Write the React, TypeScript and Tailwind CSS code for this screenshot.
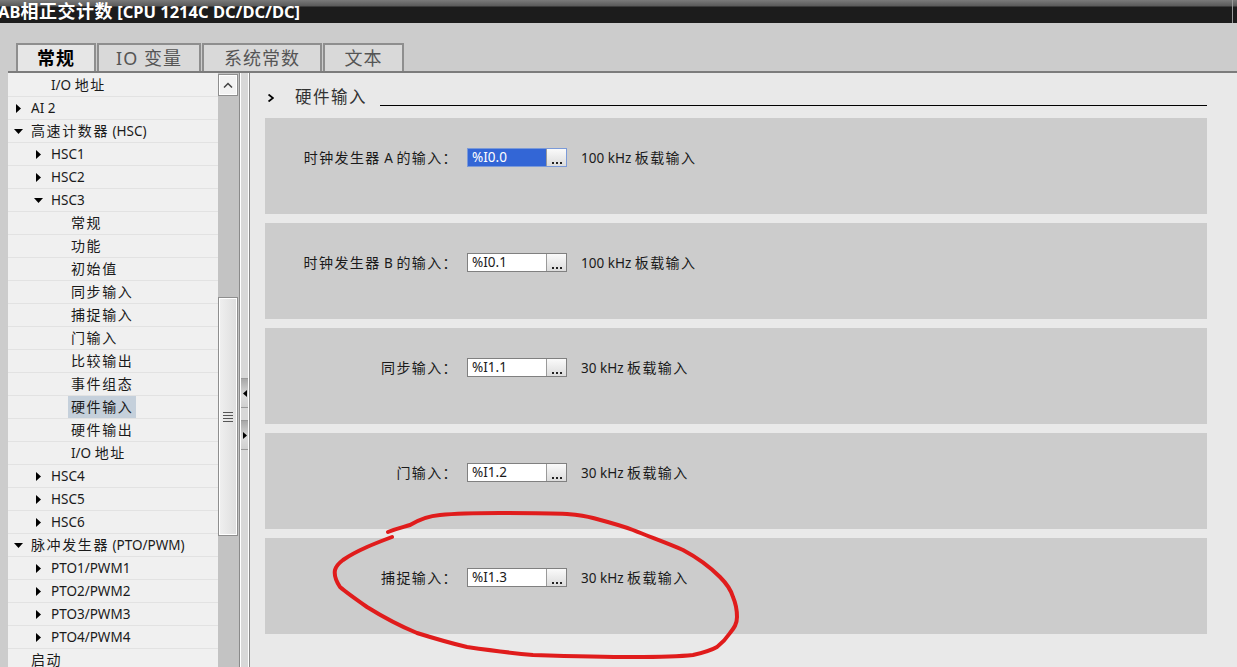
import React from 'react';

type Node = { label: string; level: 0 | 1 | 2; arrow?: 'right' | 'down'; selected?: boolean };

const tree: Node[] = [
    { label: 'I/O 地址', level: 1 },
    { label: 'AI 2', level: 0, arrow: 'right' },
    { label: '高速计数器 (HSC)', level: 0, arrow: 'down' },
    { label: 'HSC1', level: 1, arrow: 'right' },
    { label: 'HSC2', level: 1, arrow: 'right' },
    { label: 'HSC3', level: 1, arrow: 'down' },
    { label: '常规', level: 2 },
    { label: '功能', level: 2 },
    { label: '初始值', level: 2 },
    { label: '同步输入', level: 2 },
    { label: '捕捉输入', level: 2 },
    { label: '门输入', level: 2 },
    { label: '比较输出', level: 2 },
    { label: '事件组态', level: 2 },
    { label: '硬件输入', level: 2, selected: true },
    { label: '硬件输出', level: 2 },
    { label: 'I/O 地址', level: 2 },
    { label: 'HSC4', level: 1, arrow: 'right' },
    { label: 'HSC5', level: 1, arrow: 'right' },
    { label: 'HSC6', level: 1, arrow: 'right' },
    { label: '脉冲发生器 (PTO/PWM)', level: 0, arrow: 'down' },
    { label: 'PTO1/PWM1', level: 1, arrow: 'right' },
    { label: 'PTO2/PWM2', level: 1, arrow: 'right' },
    { label: 'PTO3/PWM3', level: 1, arrow: 'right' },
    { label: 'PTO4/PWM4', level: 1, arrow: 'right' },
    { label: '启动', level: 0 },
];

const indent = ['pl-[3px]', 'pl-[23px]', 'pl-[43px]'];

const rows = [
    { label: '时钟发生器 A 的输入：', value: '%I0.0', info: '100 kHz 板载输入', active: true },
    { label: '时钟发生器 B 的输入：', value: '%I0.1', info: '100 kHz 板载输入' },
    { label: '同步输入：', value: '%I1.1', info: '30 kHz 板载输入' },
    { label: '门输入：', value: '%I1.2', info: '30 kHz 板载输入' },
    { label: '捕捉输入：', value: '%I1.3', info: '30 kHz 板载输入' },
];

// CJK glyphs in the original are set wider than the latin ones, so split the runs
const Mixed = ({ text, cjk }: { text: string; cjk: string }) => (
    <span className="whitespace-pre">
        {text.split(/([\u4e00-\u9fff\uff1a]+)/).filter(Boolean).map((part, i) =>
            /[\u4e00-\u9fff\uff1a]/.test(part) ? <span key={i} className={cjk}>{part}</span> : <React.Fragment key={i}>{part}</React.Fragment>
        )}
    </span>
);

const Arrow = ({ dir }: { dir?: 'right' | 'down' }) => (
    <span className="w-[14px] h-full flex items-center justify-center shrink-0">
        {dir === 'right' && (
            <svg width="5" height="9" viewBox="0 0 5 9"><path d="M0 0 L5 4.5 L0 9 Z" fill="#000" /></svg>
        )}
        {dir === 'down' && (
            <svg width="9" height="5" viewBox="0 0 9 5"><path d="M0 0 L9 0 L4.5 5 Z" fill="#000" /></svg>
        )}
    </span>
);

const Tab = ({ children, active, w }: { children: React.ReactNode; active?: boolean; w: string }) => (
    <div
        className={`${w} h-[28px] flex items-center justify-center border-2 border-b-0 border-[#8e8e8e] text-[18px] leading-none tracking-[1px] ${active ? 'bg-[#e6e6e6] text-black font-bold' : 'bg-[#d9d9d9] text-[#555555]'}`}
    >
        {children}
    </div>
);

export default function App() {
    return (
        <div className="relative w-[1237px] h-[667px] overflow-hidden bg-[#cccccc] flex flex-col font-['Noto_Sans','Noto_Sans_CJK_SC',sans-serif] text-[#1a1a1a]">
            {/* title */}
            <div className="h-[23px] shrink-0 bg-[linear-gradient(#7a7a7a_0px,#5a5a5a_6px,#1c1c1c_7px,#1c1c1c_23px)] flex items-center relative">
                <span className="-ml-[2px] text-white font-bold text-[16.5px] leading-[23px] whitespace-nowrap">
                    <Mixed text="AB相正交计数 [CPU 1214C DC/DC/DC]" cjk="text-[18px] tracking-[0.5px]" />
                </span>
                <div className="absolute right-[4px] top-0 h-full w-px bg-[#9a9a9a]" />
            </div>

            {/* tabs */}
            <div className="h-[48px] shrink-0 flex items-end pl-[16px] gap-[1px]">
                <Tab active w="w-[80px]">常规</Tab>
                <Tab w="w-[104px]">IO 变量</Tab>
                <Tab w="w-[120px]">系统常数</Tab>
                <Tab w="w-[81px]">文本</Tab>
            </div>

            {/* main */}
            <div className="flex-1 flex min-h-0">
                <div className="w-[8px] shrink-0 bg-[#cccccc]" />
                <div className="flex-1 flex border-t-2 border-[#7c7c7c] min-h-0">
                    {/* tree */}
                    <div className="w-[210px] shrink-0 bg-[#f0f0f0] pt-[1px] text-[13.5px]">
                        {tree.map((n, i) => (
                            <div key={i} className={`h-[23px] flex items-center border-b border-[#e2e2e2] ${indent[n.level]}`}>
                                <Arrow dir={n.arrow} />
                                <span className={`ml-[6px] h-full flex items-center whitespace-nowrap ${n.selected ? 'bg-[#c5d0db] px-[3px] relative -left-[3px]' : ''}`}>
                                    <Mixed text={n.label} cjk="text-[14px] tracking-[1.6px]" />
                                </span>
                            </div>
                        ))}
                    </div>

                    {/* scrollbar */}
                    <div className="w-[21px] shrink-0 bg-[#c3c3c3] flex flex-col items-start pt-[1px]">
                        <div className="w-[20px] h-[22px] bg-[#f2f2f2] border border-[#8e8e8e] shadow-[inset_0_0_0_1px_#ffffff] flex items-center justify-center">
                            <svg width="10" height="6" viewBox="0 0 10 6"><path d="M1 5.5 L5 1.5 L9 5.5" stroke="#444" strokeWidth="1.5" fill="none" /></svg>
                        </div>
                        <div className="mt-[201px] w-[20px] h-[239px] bg-[linear-gradient(90deg,#f0f0f0,#dedede)] border border-[#8e8e8e] shadow-[inset_0_0_0_1px_#ffffff] flex flex-col items-center justify-center gap-[2px]">
                            <div className="w-[10px] h-px bg-[#555]" />
                            <div className="w-[10px] h-px bg-[#555]" />
                            <div className="w-[10px] h-px bg-[#555]" />
                            <div className="w-[10px] h-px bg-[#555]" />
                        </div>
                    </div>

                    {/* splitter */}
                    <div className="w-[11px] shrink-0 bg-[#d8d8d8] border-x border-[#8a8a8a] shadow-[inset_1px_0_0_#ffffff,inset_-1px_0_0_#ffffff] flex flex-col items-center">
                        <div className="mt-[305px] w-[7px] h-[30px] bg-[linear-gradient(#a8a8a8,#dcdcdc_60%,#d0d0d0)] border-y border-[#999] flex items-center justify-center">
                            <svg width="4" height="7" viewBox="0 0 4 7"><path d="M4 0 L0 3.5 L4 7 Z" fill="#000" /></svg>
                        </div>
                        <div className="mt-[12px] w-[7px] h-[30px] bg-[linear-gradient(#a8a8a8,#dcdcdc_60%,#d0d0d0)] border-y border-[#999] flex items-center justify-center">
                            <svg width="4" height="7" viewBox="0 0 4 7"><path d="M0 0 L4 3.5 L0 7 Z" fill="#000" /></svg>
                        </div>
                    </div>

                    {/* content */}
                    <div className="flex-1 bg-[#e9e9e9] pl-[15px] pr-[30px] pt-[13px]">
                        <div className="h-[20px] flex items-end">
                            <svg className="ml-[3px] mb-[4px]" width="6" height="8" viewBox="0 0 6 8"><path d="M0.5 0.5 L5 4 L0.5 7.5" stroke="#000" strokeWidth="1.8" fill="none" /></svg>
                            <span className="ml-[21px] text-[16.5px] tracking-[1.5px] leading-none text-[#333] mb-[1px]">硬件输入</span>
                            <div className="flex-1 ml-[13px] border-b border-black" />
                        </div>
                        <div className="mt-[12px] flex flex-col gap-[9px]">
                            {rows.map((r, i) => (
                                <div key={i} className="h-[96px] bg-[#cccccc] pt-[30px] flex items-start">
                                    <div className="w-[193px] h-[19px] flex items-center justify-end text-[13.5px] whitespace-nowrap">
                                        <Mixed text={r.label} cjk="text-[14px] tracking-[1.4px]" />
                                    </div>
                                    <div className={`ml-[9px] w-[100px] h-[19px] flex border ${r.active ? 'bg-[#3366d6] border-[#7b9ad8]' : 'bg-white border-[#808080]'}`}>
                                        <span className={`flex-1 pl-[4px] text-[13.5px] leading-[17px] ${r.active ? 'text-white' : 'text-[#1a1a1a]'}`}>{r.value}</span>
                                        <span className="w-[20px] h-full bg-[linear-gradient(#fafafa,#dcdcdc)] border-l border-[#9a9a9a] flex items-end justify-center pb-[2px] gap-[2px]">
                                            <span className="w-[2px] h-[2px] bg-[#222]" />
                                            <span className="w-[2px] h-[2px] bg-[#222]" />
                                            <span className="w-[2px] h-[2px] bg-[#222]" />
                                        </span>
                                    </div>
                                    <div className="ml-[14px] h-[19px] flex items-center text-[13.5px] whitespace-nowrap">
                                        <Mixed text={r.info} cjk="text-[14px] tracking-[1.4px]" />
                                    </div>
                                </div>
                            ))}
                        </div>
                    </div>
                </div>
            </div>

            {/* red marker circle */}
            <svg className="absolute inset-0 pointer-events-none" width="1237" height="667" viewBox="0 0 1237 667">
                <path
                    d="M388 532 C398 528 404 527 410 525 C420 519 428 516 440 515 C460 513 480 513 500 513 C525 513 548 513 567 514 C578 515 586 516 593 518 C608 522 620 525 633 530 C650 537 667 543 683 550 C698 558 710 567 720 577 C727 584 731 590 733 597 C736 604 737 610 737 617 C737 624 734 628 730 633 C726 639 722 643 717 647 C710 651 702 653 693 655 C675 657 655 657 633 657 C600 657 566 656 533 655 C510 653 488 650 467 647 C450 643 433 638 417 633 C400 626 383 617 367 607 C357 600 347 593 340 587 C336 581 334 575 335 570 C336 566 339 563 343 560 C350 555 358 551 367 547 C376 543 384 540 392 537"
                    stroke="#e01c1c"
                    strokeWidth="4"
                    fill="none"
                    strokeLinecap="round"
                    strokeLinejoin="round"
                />
            </svg>
        </div>
    );
}
